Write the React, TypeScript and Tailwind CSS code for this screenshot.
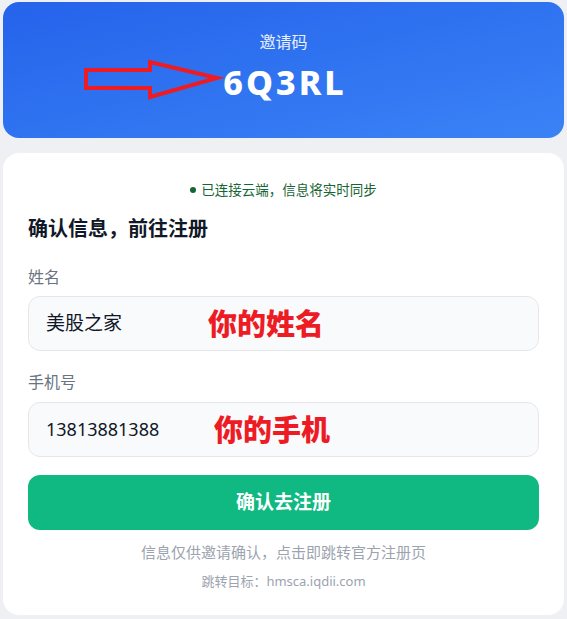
import React from "react";

export default function App() {
  return (
    <div
      className="min-h-[619px] w-[567px] bg-[#eef0f4] px-[3px] pt-[2px] pb-[4px]"
      style={{ fontFamily: '"Noto Sans", "Noto Sans CJK SC", sans-serif' }}
    >
      <div className="relative flex h-[136px] flex-col items-center rounded-[16px] bg-gradient-to-br from-[#2563eb] to-[#3b82f6] text-white">
        <div className="mt-[29px] text-[16px] leading-[22px] text-white/90">邀请码</div>
        <div className="mt-[9px] pl-[3px] text-[34px] font-extrabold leading-[40px] tracking-[3px]">6Q3RL</div>
        <svg className="absolute left-0 top-0" width="560" height="136" viewBox="0 0 560 136">
          <polygon
            points="83,68 147,68 147,60 214,76 147,95 147,86 83,86"
            fill="none"
            stroke="#ed1c24"
            strokeWidth="4"
            strokeLinejoin="miter"
          />
        </svg>
      </div>

      <div className="mt-[15px] rounded-[16px] bg-white px-[25px] pt-[27px] pb-[24px]">
        <div className="flex items-center justify-center gap-[5px] text-[13.5px] leading-[20px] text-[#166534]">
          <span className="h-[6px] w-[6px] rounded-full bg-[#166534]" />
          <span>已连接云端，信息将实时同步</span>
        </div>
        <div className="mt-[15px] text-[20px] font-bold leading-[28px] text-[#111827]">确认信息，前往注册</div>

        <div className="mt-[23px] text-[16px] leading-[22px] text-[#6b7280]">姓名</div>
        <div className="relative mt-[8px] flex h-[55px] items-center rounded-[12px] border border-[#e5e7eb] bg-[#f8fafc] px-[17px] text-[19px] text-[#111827]">
          美股之家
          <span className="absolute left-[179px] top-[9px] text-[29px] font-black leading-[36px] text-[#ed1c24]">你的姓名</span>
        </div>

        <div className="mt-[20px] text-[16px] leading-[22px] text-[#6b7280]">手机号</div>
        <div className="relative mt-[9px] flex h-[55px] items-center rounded-[12px] border border-[#e5e7eb] bg-[#f8fafc] px-[17px] text-[18px] text-[#111827]">
          13813881388
          <span className="absolute left-[185px] top-[9px] text-[29px] font-black leading-[36px] text-[#ed1c24]">你的手机</span>
        </div>

        <button className="mt-[18px] flex h-[55px] w-full items-center justify-center rounded-[12px] bg-[#10b981] text-[19px] font-bold text-white">
          确认去注册
        </button>

        <div className="mt-[11px] text-center text-[15px] leading-[22px] text-[#9ca3af]">信息仅供邀请确认，点击即跳转官方注册页</div>
        <div className="mt-[8px] text-center text-[13px] leading-[20px] text-[#9ca3af]">跳转目标：hmsca.iqdii.com</div>
      </div>
    </div>
  );
}
